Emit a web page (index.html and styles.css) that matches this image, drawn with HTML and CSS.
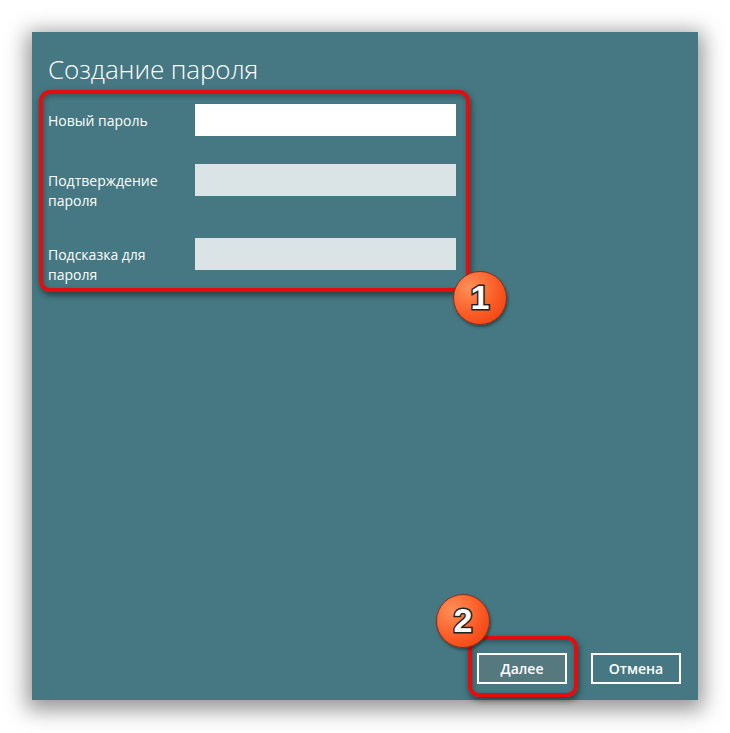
FILE: index.html
```html
<!DOCTYPE html>
<html lang="ru">
<head>
<meta charset="utf-8">
<title>Создание пароля</title>
<link rel="stylesheet" href="styles.css">
</head>
<body>
<main class="dialog">
  <h1 class="title">Создание пароля</h1>
  <form class="fields">
    <label class="label" for="p1">Новый пароль</label>
    <input class="input input-active" id="p1" type="password">
    <label class="label" for="p2">Подтверждение пароля</label>
    <input class="input" id="p2" type="password">
    <label class="label" for="p3">Подсказка для пароля</label>
    <input class="input" id="p3" type="text">
  </form>
  <footer class="actions">
    <button class="btn btn-primary" type="button">Далее</button>
    <button class="btn" type="button">Отмена</button>
  </footer>
  <div class="mark mark-fields"></div>
  <div class="mark mark-next"></div>
  <div class="badge badge-1">1</div>
  <div class="badge badge-2">2</div>
</main>
</body>
</html>
```
FILE: styles.css
```css
html, body {
  margin: 0;
  height: 100%;
  background: #fff;
}
body {
  padding: 32px 32px 33px;
  box-sizing: border-box;
  overflow: hidden;
  font-family: "Open Sans", "Noto Sans", sans-serif;
}
.dialog {
  position: relative;
  box-sizing: border-box;
  width: 666px;
  height: 668px;
  padding: 21px 17px 16px 16px;
  display: flex;
  flex-direction: column;
  background: #457882;
  box-shadow: 0 5px 20px 5px rgba(0, 0, 0, .42);
  color: #fff;
}
.title {
  margin: 0;
  height: 51px;
  font-size: 26px;
  line-height: 32px;
  font-weight: 300;
  letter-spacing: -.1px;
}
.fields {
  display: grid;
  grid-template-columns: 147px 261px;
  row-gap: 28px;
  align-items: start;
}
.label {
  padding-top: 7px;
  margin-bottom: -1px;
  font-size: 14px;
  line-height: 20px;
  width: 135px;
}
.input {
  display: block;
  box-sizing: border-box;
  width: 261px;
  height: 32px;
  border: 0;
  padding: 0;
  background: #dae3e6;
}
.input-active {
  background: #fff;
}
.actions {
  margin-top: auto;
  display: flex;
  justify-content: flex-end;
  gap: 24px;
}
.btn {
  box-sizing: border-box;
  width: 90px;
  height: 31px;
  padding: 0;
  border: 2px solid #fff;
  background: transparent;
  color: #fff;
  font: 600 14px/20px "Open Sans", "Noto Sans", sans-serif;
}
.btn-primary {
  background: #55797f;
}
.mark {
  position: absolute;
  box-sizing: border-box;
  border: 4px solid #e40c0c;
  border-radius: 11px;
  box-shadow: 1px 3px 6px rgba(0, 0, 0, .5), inset 1px 2px 5px rgba(0, 0, 0, .3);
}
.mark-fields {
  left: 7px;
  top: 58px;
  width: 431px;
  height: 202px;
}
.mark-next {
  left: 436px;
  top: 604px;
  width: 110px;
  height: 61px;
}
.badge {
  position: absolute;
  box-sizing: border-box;
  width: 54px;
  height: 54px;
  border: 1px solid #8e2c17;
  border-radius: 50%;
  background: radial-gradient(circle at 30% 30%, #ff9058 0%, #fb5a24 55%, #e83c0c 100%);
  box-shadow: 1px 2px 3px rgba(0, 0, 0, .4);
  text-align: center;
  font: 700 34px/50px "Liberation Sans", sans-serif;
  color: #fff;
  -webkit-text-stroke: 3px #222;
  paint-order: stroke fill;
}
.badge-1 {
  left: 421px;
  top: 239px;
}
.badge-2 {
  left: 404px;
  top: 562px;
}
```
